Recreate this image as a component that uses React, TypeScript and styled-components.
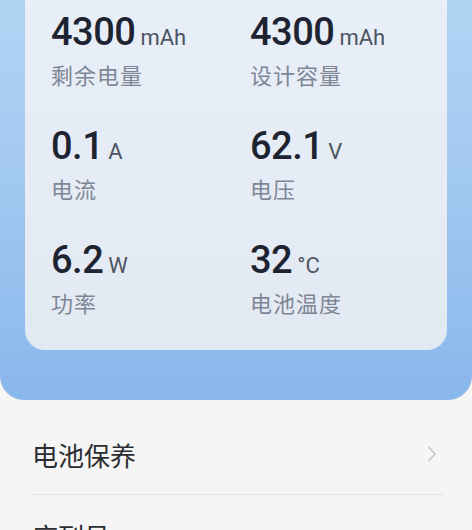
import React, { FunctionComponent } from 'react';
import styled, { createGlobalStyle } from 'styled-components';

type Stat = {
  value: string,
  unit: string,
  label: string
};

type MenuItem = {
  title: string,
  link: boolean
};

const stats: Stat[] = [
  { value: '4300', unit: 'mAh', label: '剩余电量' },
  { value: '4300', unit: 'mAh', label: '设计容量' },
  { value: '0.1', unit: 'A', label: '电流' },
  { value: '62.1', unit: 'V', label: '电压' },
  { value: '6.2', unit: 'W', label: '功率' },
  { value: '32', unit: '°C', label: '电池温度' }
];

const menu: MenuItem[] = [
  { title: '电池保养', link: true },
  { title: '序列号', link: false }
];

const GlobalStyle = createGlobalStyle`
  html, body {
    margin: 0;
    padding: 0;
    background: #f5f5f5;
    font-family: Roboto, "Noto Sans CJK SC", sans-serif;
    overflow: hidden;
  }
`;

const Page = styled.div`
  display: flex;
  flex-direction: column;
  width: 472px;
  height: 530px;
  overflow: hidden;
`;

const Header = styled.div`
  background: linear-gradient(180deg, #b2d4f4 0%, #a0c7f0 50%, #89b6eb 100%);
  border-radius: 0 0 24px 24px;
  padding: 0 25px 50px;
`;

const Card = styled.div`
  background: linear-gradient(180deg, #e8eff8 0%, #e3e9f3 100%);
  border-radius: 20px;
  margin-top: -20px;
  padding: 30px 26px 33px;
  display: grid;
  grid-template-columns: 199px 1fr;
  row-gap: 35px;
`;

const Cell = styled.div`
  display: flex;
  flex-direction: column;
`;

const ValueLine = styled.div`
  display: flex;
  align-items: baseline;
  height: 44px;
  line-height: 44px;
`;

const Value = styled.span`
  font-family: Roboto, sans-serif;
  font-size: 38px;
  font-weight: 500;
  letter-spacing: -0.5px;
  color: #1d2331;
`;

const Unit = styled.span`
  font-family: Roboto, sans-serif;
  font-size: 22px;
  color: #4d5462;
  margin-left: 5px;
`;

const Label = styled.div`
  font-family: "Noto Sans CJK SC", sans-serif;
  font-size: 22px;
  line-height: 30px;
  letter-spacing: 1px;
  color: #7e8696;
  margin-top: 5px;
`;

const List = styled.div`
  display: flex;
  flex-direction: column;
  padding: 14px 29px 0 32px;
`;

const Row = styled.div<{ $divider?: boolean }>`
  display: flex;
  align-items: center;
  justify-content: space-between;
  height: 80px;
  flex-shrink: 0;
  border-bottom: ${p => (p.$divider ? '1px solid #e4e4e4' : 'none')};
`;

const RowTitle = styled.span`
  font-family: "Noto Sans CJK SC", sans-serif;
  font-size: 26px;
  color: #2b2d31;
`;

const Chevron = styled.svg`
  width: 10px;
  height: 16px;
  margin-right: 6px;
`;

const StatCell: FunctionComponent<{ stat: Stat }> = ({ stat }) => (
  <Cell>
    <ValueLine>
      <Value>{stat.value}</Value>
      <Unit>{stat.unit}</Unit>
    </ValueLine>
    <Label>{stat.label}</Label>
  </Cell>
);

const App: FunctionComponent = () => {
  return (
    <Page>
      <GlobalStyle />
      <Header>
        <Card>
          {stats.map((s, i) => <StatCell key={i} stat={s} />)}
        </Card>
      </Header>
      <List>
        {menu.map((item, i) => (
          <Row key={item.title} $divider={i < menu.length - 1}>
            <RowTitle>{item.title}</RowTitle>
            {item.link && (
              <Chevron viewBox="0 0 10 16">
                <path d="M2 1.5 L8 8 L2 14.5" fill="none" stroke="#c6c6c6" strokeWidth="1.6" strokeLinecap="round" strokeLinejoin="round" />
              </Chevron>
            )}
          </Row>
        ))}
      </List>
    </Page>
  );
};

export default App;
